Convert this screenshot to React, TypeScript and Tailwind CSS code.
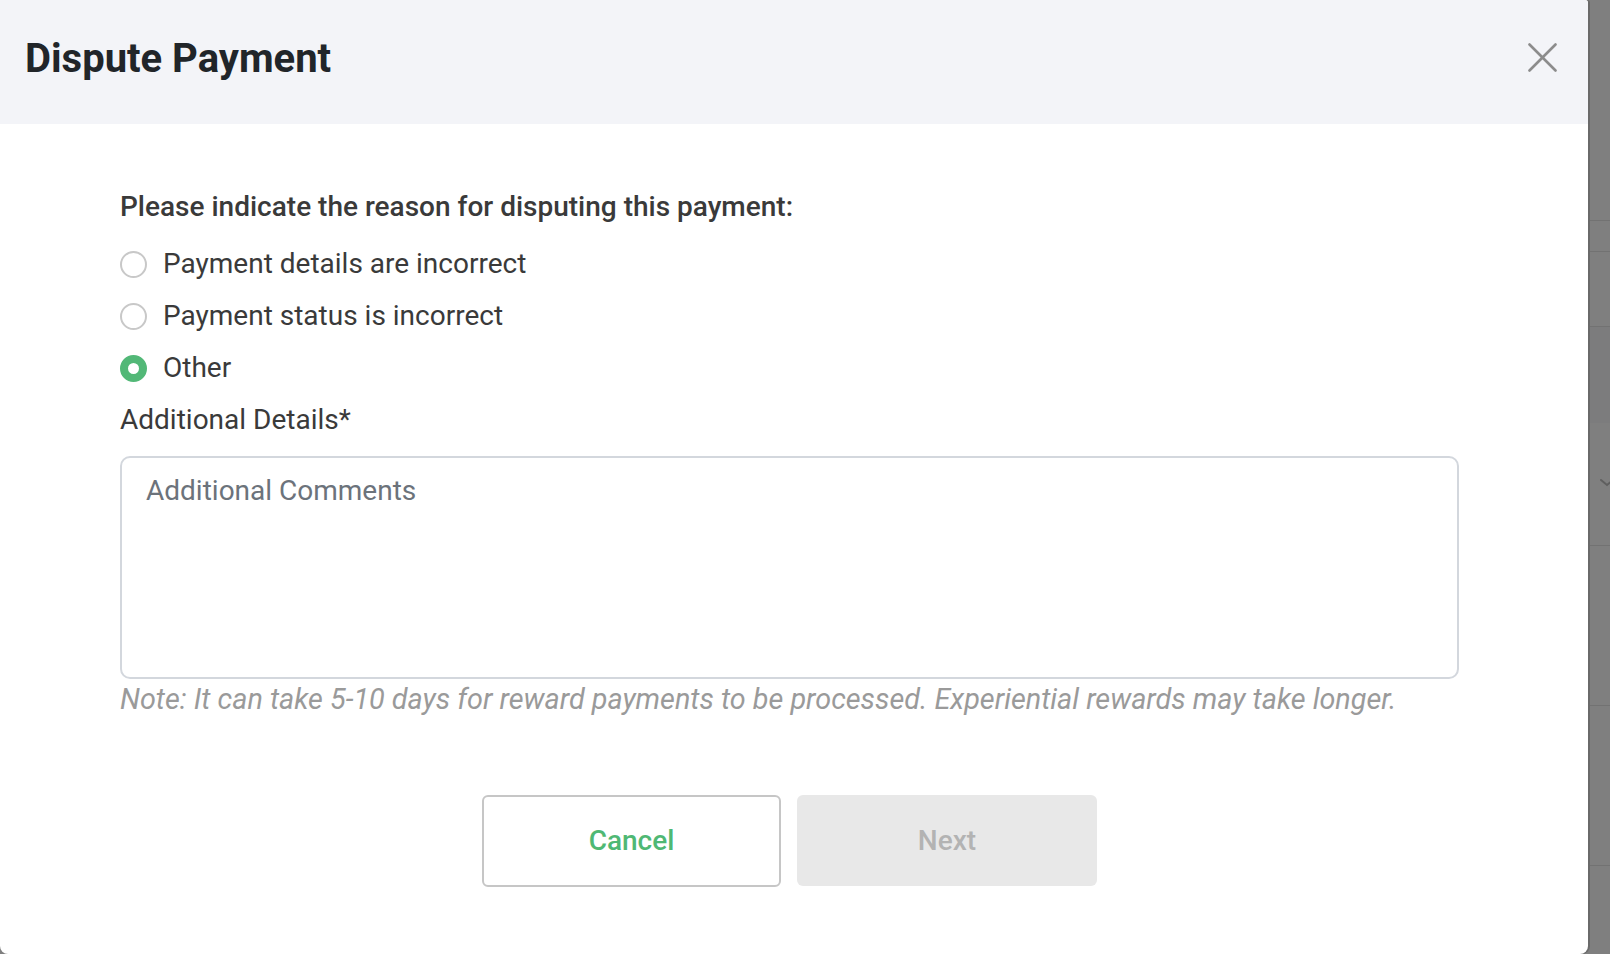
import React from "react";

function Radio({ checked }: { checked?: boolean }) {
  return checked ? (
    <span className="box-border block h-[27px] w-[27px] shrink-0 rounded-full border-[8px] border-[#52b877] bg-white" />
  ) : (
    <span className="box-border block h-[27px] w-[27px] shrink-0 rounded-full border-2 border-[#c8c8c8] bg-white" />
  );
}

export default function App() {
  const options = [
    { label: "Payment details are incorrect", checked: false },
    { label: "Payment status is incorrect", checked: false },
    { label: "Other", checked: true },
  ];
  return (
    <div className="flex h-[954px] w-[1610px] overflow-hidden bg-[#7f7f7f] font-['Roboto','Liberation_Sans',sans-serif]">
      <div className="relative z-10 flex h-[954px] w-[1588px] shrink-0 flex-col overflow-hidden rounded-b-[8px] rounded-tr-[3px] bg-white shadow-[2px_0_0_#6a6a6a]">
        <div className="flex h-[124px] shrink-0 items-start justify-between bg-[#f3f4f8] pl-[25px] pr-[31px]">
          <h1 className="pt-[35px] text-[40px] font-bold leading-[48px] text-[#212529]">
            Dispute Payment
          </h1>
          <svg
            className="mt-[43px]"
            width="29"
            height="29"
            viewBox="0 0 29 29"
            fill="none"
            stroke="#8c8c8c"
            strokeWidth="2.6"
            strokeLinecap="round"
          >
            <line x1="1.5" y1="1.5" x2="27.5" y2="27.5" />
            <line x1="27.5" y1="1.5" x2="1.5" y2="27.5" />
          </svg>
        </div>

        <div className="flex flex-1 flex-col pl-[120px] pr-[129px] pt-[65px]">
          <p className="text-[28px] font-medium leading-[36px] text-[#3a3a3a]">
            Please indicate the reason for disputing this payment:
          </p>
          <div className="mt-[21px] flex flex-col gap-[16px]">
            {options.map((o) => (
              <label key={o.label} className="flex items-center gap-[16px] text-[28px] leading-[36px] text-[#3a3a3a]">
                <Radio checked={o.checked} />
                <span>{o.label}</span>
              </label>
            ))}
            <div className="text-[28px] leading-[36px] text-[#3a3a3a]">Additional Details*</div>
          </div>

          <div className="mt-[18px] box-border h-[223px] w-full rounded-[10px] border-2 border-[#d3d7dd] pl-[24px] pt-[15px]">
            <span className="text-[28px] leading-[36px] text-[#6c737b]">Additional Comments</span>
          </div>
          <p className="mt-[2px] text-[28.8px] italic leading-[36px] text-[#9a9a9a]">
            Note: It can take 5-10 days for reward payments to be processed. Experiential rewards may take longer.
          </p>

          <div className="mt-[78px] flex justify-center gap-[16px]">
            <button className="box-border h-[92px] w-[299px] rounded-[6px] border-2 border-[#c6c6c6] bg-white text-[28px] font-medium text-[#4fb874]">
              Cancel
            </button>
            <button className="box-border h-[91px] w-[300px] rounded-[6px] bg-[#e8e8e8] text-[28px] font-medium text-[#b3b3b3]">
              Next
            </button>
          </div>
        </div>
      </div>

      <div className="flex flex-1 flex-col">
        <div className="h-[221px] shrink-0 border-b border-[#727272]" />
        <div className="h-[31px] shrink-0 border-b border-[#727272]" />
        <div className="h-[75px] shrink-0 border-b border-[#727272]" />
        <div className="h-[96px] shrink-0 bg-[#7c7c7d]" />
        <div className="relative h-[123px] shrink-0 border-b border-[#727272]">
          <svg className="absolute left-[12px] top-[54px]" width="14" height="14" viewBox="0 0 14 14" fill="none" stroke="#5f5f5f" strokeWidth="2" strokeLinecap="round">
            <polyline points="1,3 7,8 13,3" />
          </svg>
        </div>
        <div className="h-[160px] shrink-0 border-b border-[#727272]" />
        <div className="h-[160px] shrink-0 border-b border-[#727272]" />
        <div className="flex-1" />
      </div>
    </div>
  );
}
